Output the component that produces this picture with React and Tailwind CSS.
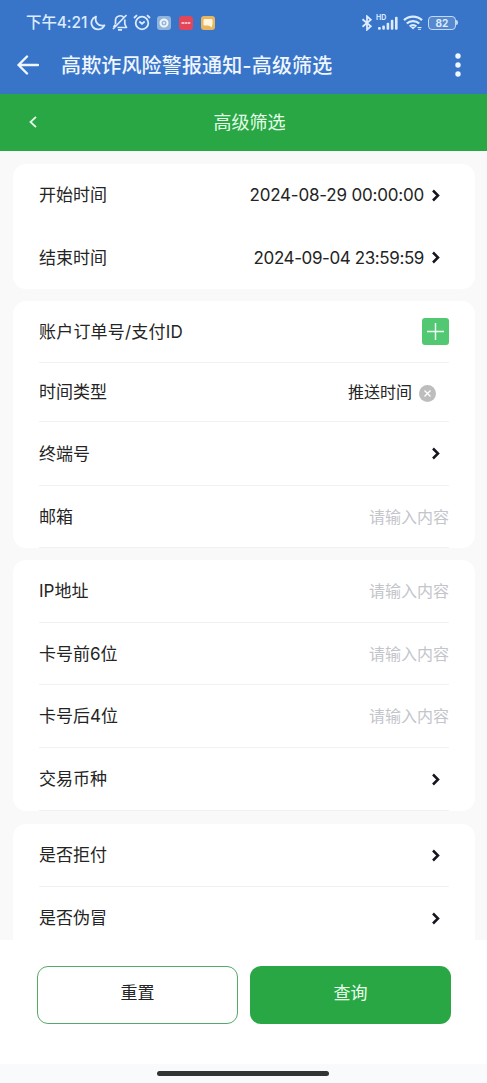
import React from 'react';

const cards = [
  {
    className: 'h-[125px]',
    rows: [
      { label: '开始时间', height: 'h-[62px]', type: 'link', value: '2024-08-29 00:00:00', tracking: 'tracking-[-0.2px]' },
      { label: '结束时间', height: 'h-[63px]', type: 'link', value: '2024-09-04 23:59:59', tracking: 'tracking-[-0.4px]' },
    ],
  },
  {
    className: 'mt-3 h-[247px]',
    divided: true,
    rows: [
      { label: '账户订单号/支付ID', height: 'h-[62px]', type: 'add', labelTracking: 'tracking-[0.2px]' },
      { label: '时间类型', height: 'h-[59px]', type: 'clear', value: '推送时间' },
      { label: '终端号', height: 'h-[64px]', type: 'link' },
      { label: '邮箱', height: 'h-[62px]', type: 'input' },
    ],
  },
  {
    className: 'mt-3 h-[251px]',
    divided: true,
    rows: [
      { label: 'IP地址', height: 'h-[63px]', type: 'input' },
      { label: '卡号前6位', height: 'h-[62px]', type: 'input' },
      { label: '卡号后4位', height: 'h-[63px]', type: 'input' },
      { label: '交易币种', height: 'h-[63px]', type: 'link' },
    ],
  },
  {
    className: 'mt-[13px] h-[126px]',
    divided: true,
    rows: [
      { label: '是否拒付', height: 'h-[63px]', type: 'link' },
      { label: '是否伪冒', height: 'h-[63px]', type: 'link' },
    ],
  },
];

function Chevron() {
  return (
    <svg className="w-[9px] h-[13px] mr-[9px] shrink-0" viewBox="0 0 9 13" fill="none" stroke="#15151f" strokeWidth="2.5"><path d="M2 1.500l5 5-5 5" /></svg>
  );
}

function StatusBar() {
  return (
    <div className="h-[45px] flex items-center pl-[26px] pr-[29px] text-[#dcebff]">
      <span className="w-[64px] text-[15.5px] font-medium whitespace-nowrap tracking-[-0.1px]">下午4:21</span>
      <svg className="w-4 h-4" viewBox="0 0 16 16" fill="none" stroke="currentColor" strokeWidth="1.8" strokeLinejoin="round"><path d="M6 1.500C1.600 3 .2 8 2.500 11.500c2.800 4.200 9.500 3.700 11.900-1.200C8.500 11.700 4.300 7.300 6 1.500z" /></svg>
      <svg className="ml-[6px] w-4 h-[17px]" viewBox="0 0 16 17" fill="none" stroke="currentColor" strokeWidth="1.700" strokeLinejoin="round">
        <path d="M3.500 10V6.500c0-5 6.800-6.300 8.500-2.500M12.800 5.500V10l1.700 3.500H5.500M1 15L14.500 1M1.500 13l2-2.500M6 15.800h4" />
      </svg>
      <svg className="ml-[5px] w-[18px] h-[17px]" viewBox="0 0 18 17" fill="none" stroke="currentColor" strokeWidth="1.800">
        <circle cx="9" cy="9" r="6.300" />
        <path d="M6.300 7.500L9 9.800l2.700-2.300M1 4l3-2.800M17 4l-3-2.800" />
      </svg>
      <svg className="ml-[6px] w-[14px] h-[14px]" viewBox="0 0 14 14">
        <rect width="14" height="14" rx="3" fill="#91b4dc" />
        <circle cx="7" cy="7" r="3.500" fill="none" stroke="#f0f5fa" strokeWidth="2" />
        <circle cx="7" cy="7" r="1.200" fill="#dce8f5" />
      </svg>
      <svg className="ml-2 w-[14px] h-[14px]" viewBox="0 0 14 14">
        <rect width="14" height="14" rx="3" fill="#e34658" />
        <path d="M2.500 7h9" stroke="#ffb8c0" strokeWidth="1.800" strokeDasharray="2.600 .5" />
      </svg>
      <svg className="ml-2 w-[14px] h-[14px]" viewBox="0 0 14 14">
        <rect width="14" height="14" rx="3" fill="#e8b65c" />
        <rect x="2.500" y="3" width="9" height="6.500" rx="1" fill="#fff6df" />
        <path d="M7 9h4v2.500z" fill="#fff6df" />
      </svg>
      <svg className="ml-auto w-[12px] h-[16px]" viewBox="0 0 12 16" fill="none" stroke="currentColor" strokeWidth="1.800"><path d="M1.500 4.200l8.300 7L6 14.700V1.300l3.800 3.500-8.300 7" /></svg>
      <div className="ml-[3px] w-[23px] h-4 relative">
        <span className="absolute left-0 top-[-1px] text-[7px] leading-[7px] font-bold">HD</span>
        <svg className="w-full h-full" viewBox="0 0 23 16" fill="currentColor">
          <rect x="2" y="12" width="2.800" height="2.800" rx="1" />
          <rect x="6.300" y="10.500" width="2.600" height="4.300" rx="1" />
          <rect x="10.600" y="7.800" width="2.600" height="7" rx="1" />
          <rect x="14.800" y="4.800" width="2.600" height="10" rx="1" />
          <rect x="19" y="1.800" width="2.600" height="13" rx="1" />
        </svg>
      </div>
      <svg className="ml-[4px] w-5 h-[15px]" viewBox="0 0 20 15" fill="none" stroke="currentColor" strokeWidth="2.300">
        <path d="M1 5.200c5-4.700 13-4.700 18 0M3.800 8.500c3.400-3.200 9-3.200 12.400 0M6.700 11.500c1.800-1.700 4.800-1.700 6.600 0" />
        <path d="M7.500 12l2.500 2.500 2.500-2.500z" fill="currentColor" stroke="none" />
        <path d="M14.500 12.500h4M15 14.300h3" strokeWidth="1" />
      </svg>
      <div className="ml-[5px] w-[28px] h-[14px] border-[1.500px] border-[#bfd9fa] rounded-[4px] bg-[#5688cd] flex items-center justify-center font-[Inter] text-[10px] leading-none font-bold">82</div>
      <div className="w-[2px] h-[5px] bg-[#bfd9fa] rounded-r" />
    </div>
  );
}

function RowValue({ row }) {
  if (row.type === 'add') {
    return (
      <button className="w-[27px] h-[27px] rounded-[3px] bg-[#53c873] flex items-center justify-center">
        <svg className="w-[17px] h-[17px]" viewBox="0 0 17 17" stroke="#effff2" strokeWidth="1.500"><path d="M8.500 0v17M0 8.500h17" /></svg>
      </button>
    );
  }
  if (row.type === 'clear') {
    return (
      <div className="flex items-center text-[16px] pr-[13px]">
        <span>{row.value}</span>
        <svg className="ml-[7px] mt-[2px] w-[17px] h-[17px]" viewBox="0 0 17 17">
          <circle cx="8.500" cy="8.500" r="8.500" fill="#bdbdbd" />
          <path d="M5.500 5.500l6 6M11.500 5.500l-6 6" stroke="#fff" strokeWidth="1.300" />
        </svg>
      </div>
    );
  }
  if (row.type === 'input') {
    return <input className="w-[160px] text-right text-[16px] outline-none placeholder:text-[#c3c5cb]" placeholder="请输入内容" />;
  }
  return (
    <div className="flex items-center">
      {row.value && <span className={`mr-[7px] pt-[2px] whitespace-nowrap ${row.tracking}`}>{row.value}</span>}
      <Chevron />
    </div>
  );
}

function App() {
  return (
    <div className="w-full h-[1083px] overflow-hidden flex flex-col bg-[#f9f9f9] text-[17px] text-[#242424] font-[Inter,'Noto_Sans_CJK_SC',sans-serif]">
      <header className="h-[94px] shrink-0 bg-[#3875c8]">
        <StatusBar />
        <div className="h-10 flex items-center pl-[17px] pr-[26px] text-[#f0f6ff]">
          <svg className="w-[22px] h-5" viewBox="0 0 22 20" fill="none" stroke="currentColor" strokeWidth="2.400" strokeLinecap="round" strokeLinejoin="round"><path d="M10 1.500L1.500 10l8.500 8.500M1.500 10H21" /></svg>
          <h1 className="ml-[22px] pt-px text-[20px] font-medium whitespace-nowrap tracking-[0.15px]">高欺诈风险警报通知-高级筛选</h1>
          <svg className="ml-auto w-[6px] h-6" viewBox="0 0 6 24" fill="currentColor"><circle cx="3" cy="3" r="2.700" /><circle cx="3" cy="12" r="2.700" /><circle cx="3" cy="21" r="2.700" /></svg>
        </div>
      </header>
      <nav className="h-[57px] shrink-0 bg-[#29a745] grid grid-cols-[60px_1fr_48px] items-center pb-px text-[#e6ffe9]">
        <svg className="ml-[29px] w-[8px] h-[12px]" viewBox="0 0 8 12" fill="none" stroke="currentColor" strokeWidth="1.800"><path d="M7 .8L1.500 6 7 11.200" /></svg>
        <h2 className="text-center text-[18px]">高级筛选</h2>
      </nav>
      <main className="flex-1 min-h-0 overflow-hidden px-[13px] pt-[13px]">
        {cards.map((card, i) => (
          <section key={i} className={`bg-white rounded-[13px] pl-[26px] pr-[26px] mr-[-1px] overflow-hidden ${card.className}`}>
            {card.rows.map(row => (
              <div key={row.label} className={`flex items-center justify-between ${row.height} ${card.divided ? 'border-b border-[#f1f1f2]' : ''}`}>
                <span className={`pt-[2px] whitespace-nowrap ${row.labelTracking || ''}`}>{row.label}</span>
                <RowValue row={row} />
              </div>
            ))}
          </section>
        ))}
      </main>
      <footer className="h-[124px] shrink-0 bg-white grid grid-cols-2 gap-3 pl-[37px] pr-[36px] pt-[26px]">
        <button className="h-[58px] pb-[3px] rounded-[11px] border border-[#55aa68]">重置</button>
        <button className="h-[58px] pb-[3px] rounded-[11px] bg-[#29a745] text-[#e9ffec]">查询</button>
      </footer>
      <div className="h-[19px] shrink-0 bg-[#f9fafc] flex justify-center pt-[7px]">
        <div className="w-[172px] h-[5px] mr-px rounded-full bg-[#333436]" />
      </div>
    </div>
  );
}
export default App;
